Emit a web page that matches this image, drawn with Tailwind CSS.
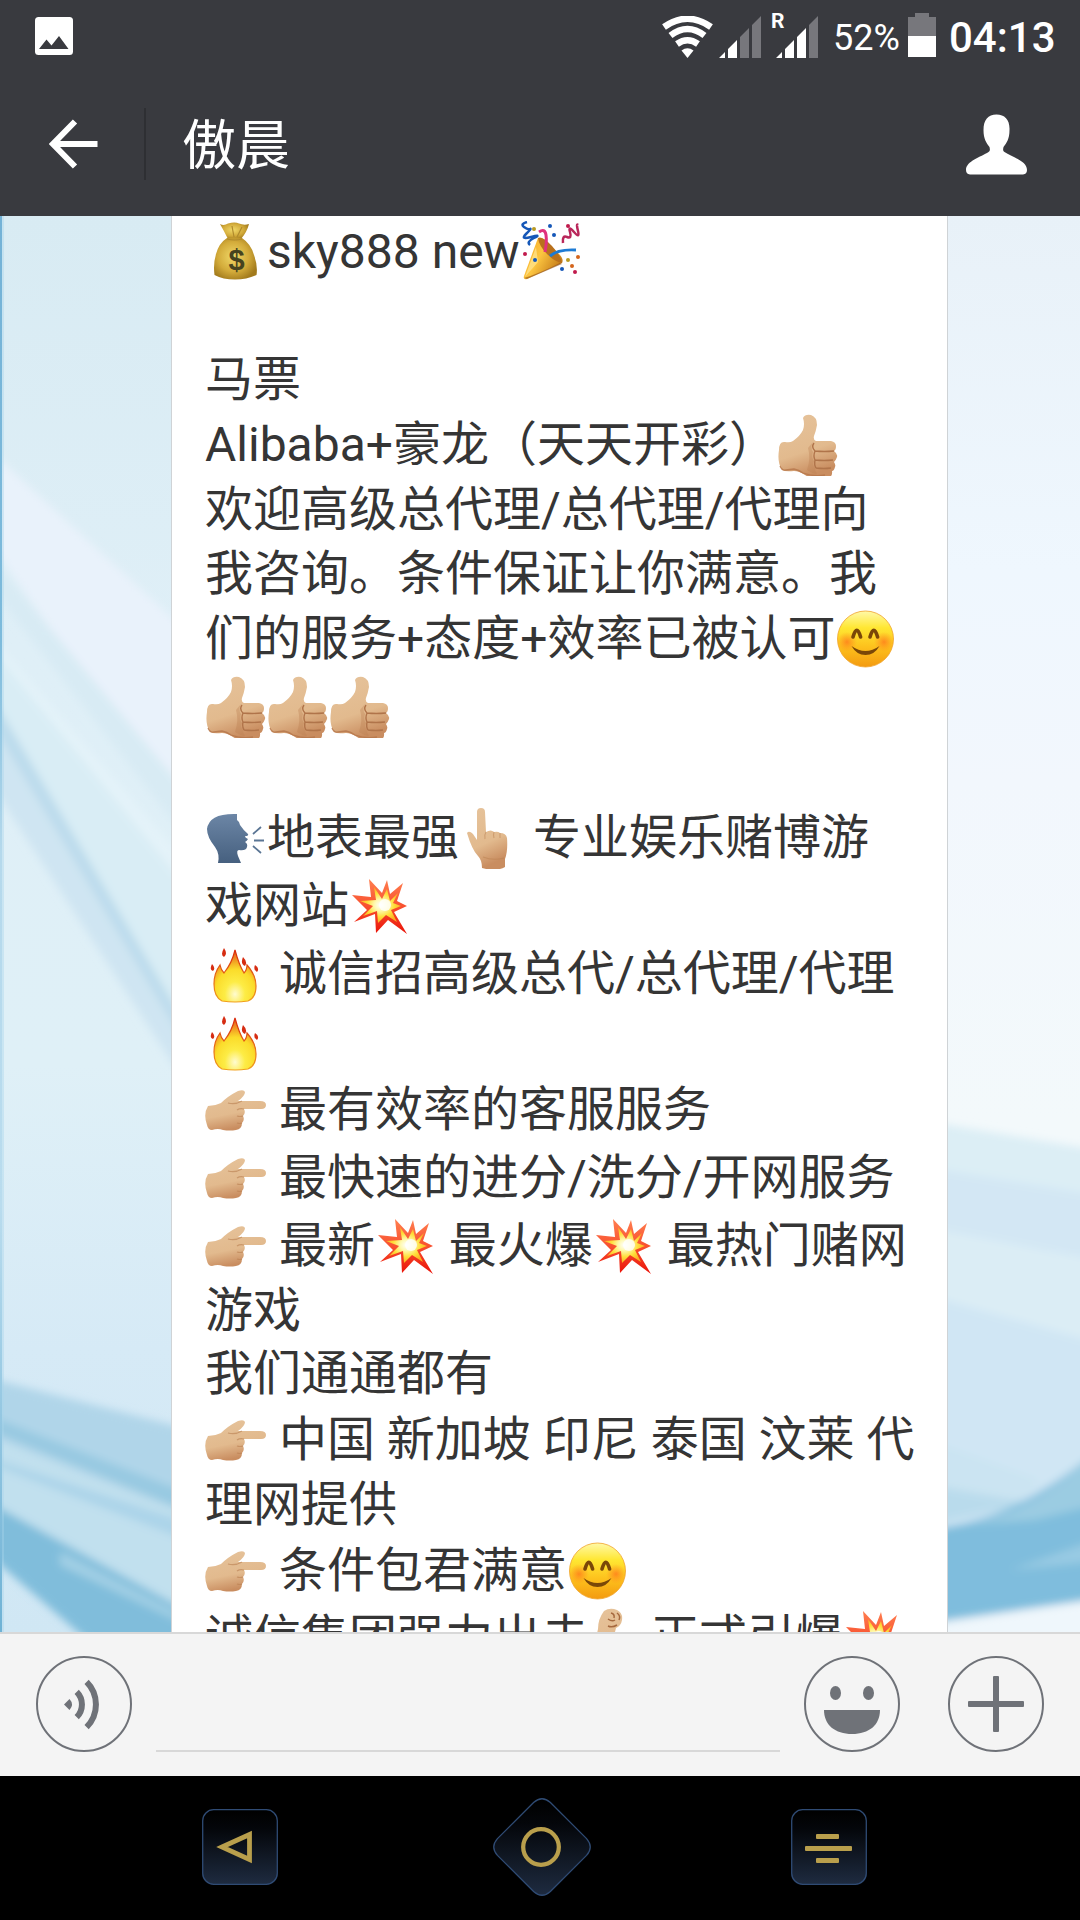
<!DOCTYPE html>
<html lang="zh-CN">
<head>
<meta charset="utf-8">
<title>傲晨</title>
<script src="https://cdn.jsdelivr.net/npm/@tailwindcss/browser@4"></script>
</head>
<body class="flex h-[1920px] w-[1080px] flex-col overflow-hidden bg-black font-['Roboto','Noto_Sans_CJK_SC',sans-serif]">

<!-- Emoji symbols -->
<svg class="absolute h-0 w-0">
  <defs>
    <linearGradient id="skin" x1="0" y1="0" x2="0.3" y2="1"><stop offset="0" stop-color="#e6c39b"/><stop offset=".65" stop-color="#e2ba8e"/><stop offset="1" stop-color="#c98d60"/></linearGradient>
    <radialGradient id="gold" cx=".45" cy=".45" r=".6"><stop offset="0" stop-color="#f0d868"/><stop offset=".6" stop-color="#d3ab3a"/><stop offset="1" stop-color="#a27a1c"/></radialGradient>
    <linearGradient id="face" x1="0" y1="0" x2="0" y2="1"><stop offset="0" stop-color="#fff9a8"/><stop offset=".3" stop-color="#ffe733"/><stop offset=".65" stop-color="#fdc01c"/><stop offset="1" stop-color="#f39a10"/></linearGradient>
    <radialGradient id="blush"><stop offset="0" stop-color="#ff7a1c" stop-opacity=".8"/><stop offset="1" stop-color="#ff8a1c" stop-opacity="0"/></radialGradient>
    <linearGradient id="red" x1="0" y1="0" x2="0" y2="1"><stop offset="0" stop-color="#ff7f50"/><stop offset=".5" stop-color="#f8502f"/><stop offset="1" stop-color="#ea1208"/></linearGradient>
    <radialGradient id="burst"><stop offset="0" stop-color="#ffffff"/><stop offset=".3" stop-color="#fff9b0"/><stop offset=".65" stop-color="#ffdf3c"/><stop offset="1" stop-color="#fbae20"/></radialGradient>
    <radialGradient id="flame" cx=".5" cy=".85" r=".8"><stop offset="0" stop-color="#fffbd0"/><stop offset=".3" stop-color="#fdec45"/><stop offset=".6" stop-color="#fbdc2a"/><stop offset="1" stop-color="#e8621c"/></radialGradient>
    <linearGradient id="flameEdge" x1="0" y1="0" x2="0" y2="1"><stop offset="0" stop-color="#d8280c"/><stop offset="1" stop-color="#f1a01c"/></linearGradient>
    <linearGradient id="head" x1="0" y1="0" x2="0" y2="1"><stop offset="0" stop-color="#6c86a6"/><stop offset="1" stop-color="#46607f"/></linearGradient>
    <linearGradient id="cone" x1="0" y1="0" x2="1" y2=".6"><stop offset="0" stop-color="#f7a51f"/><stop offset=".5" stop-color="#fcc540"/><stop offset="1" stop-color="#c47a18"/></linearGradient>

    <symbol id="money" viewBox="0 0 62 62">
      <path d="M15 3q4 2 8-.5 7-2 11 0 5 2 10 .5-2 8-8 15H23Q19 10 15 3z" fill="url(#gold)"/>
      <path d="M22 17h15q9 6 12 17 4 11 2.500 20Q42 58.500 30 58.500T9.500 54Q8 43 11 33 14 22 22 17z" fill="url(#gold)"/>
      <path d="M22 18q8 2 15 0M27 5l2 11M37 6l-5 10" stroke="#b08a2c" stroke-width="1.200" fill="none"/>
      <text x="31.500" y="49" text-anchor="middle" font-family="Liberation Sans" font-weight="700" font-size="29" fill="#46431f">$</text>
    </symbol>

    <symbol id="party" viewBox="0 0 62 62">
      <path d="M18 17 4 55q-1 4 3 3l35-16q2-4-3-9L26 20q-5-5-8-3z" fill="url(#cone)"/>
      <path d="M18 17q5-2 14 8t10 17q-7-1-15-9t-9-16z" fill="#b8701c"/>
      <path d="M16 26 5 56l13-15z" fill="#ffe28a" opacity=".8"/>
      <path d="M4 57q14-4 36-15l2 1L7 58z" fill="#8a4a12" opacity=".6"/>
      <path d="M19 11q6-4 7 3t-1 17" stroke="#e0317c" stroke-width="3" fill="none"/>
      <path d="M30 35q8-7 26-6" stroke="#1d7bd4" stroke-width="3" fill="none"/>
      <path d="M7 1q-7 2-3 5t6 2-4 5 5 3 3 1-4 7" stroke="#1557b8" stroke-width="2.500" fill="none"/>
      <path d="M43 22q-1-8 4-6t3-5 4 0 4-1 0-6" stroke="#b9265a" stroke-width="2.500" fill="none"/>
      <g fill="#1557b8"><circle cx="30" cy="5" r="2"/><circle cx="34" cy="14" r="2"/><circle cx="15" cy="39" r="2"/><circle cx="42" cy="48" r="2"/></g>
      <g fill="#c11a4c"><circle cx="48" cy="5" r="2"/><circle cx="5" cy="33" r="2"/><circle cx="55" cy="51" r="2"/></g>
      <g fill="#b99a22"><circle cx="14" cy="8" r="2"/><circle cx="48" cy="39" r="2"/></g>
      <g fill="#d4651c"><circle cx="58" cy="36" r="2"/><circle cx="52" cy="45" r="2"/></g>
    </symbol>

    <symbol id="thumb" viewBox="0 0 62 62">
      <path d="M26 4q2-4 8-3 6 2 6 10-1 6-3 11-1 4 2 5h15q5 1 5 5 0 4-2 5 4 3 3 6t-3 5q2 3 1 5-1 4-3 4 1 7-7 8-12 1-20-4-6-4-11-4Q8 58 5 56 0 48 2 36 2 27 8 28q5 1 8-1 7-5 10-11 2-6 0-12z" fill="url(#skin)"/>
      <path d="M36 28q-3 5 0 10-2 5 1 9-2 4 1 7 0 3 2 6-6-1-10-4 4-12 1-22z" fill="#b97f50" opacity=".35"/>
      <path d="M38 37q9 1 19 0M38 46q9 1 18 0M39 54q8 1 15 0M37 29q-3 4 1 8-2 5 0 9-1 5 1 8" stroke="#b0744a" stroke-width="1.400" fill="none"/>
      <path d="M3 52q2 5 6 4l8-1q5 1 9 4 11 4 22 2" stroke="#b5764a" stroke-width="1.300" fill="none" opacity=".8"/>
    </symbol>

    <symbol id="blushface" viewBox="0 0 62 62">
      <circle cx="30.500" cy="31" r="28" fill="url(#face)" stroke="#f0a22a" stroke-width=".8"/>
      <circle cx="12" cy="34" r="10" fill="url(#blush)"/><circle cx="49" cy="34" r="10" fill="url(#blush)"/>
      <path d="M18 29q3.800-13.500 7.600 0M35 29q3.800-13.500 7.600 0" stroke="#7a4708" stroke-width="3.600" fill="none" stroke-linecap="round"/>
      <path d="M16.500 38q14 10 28 0-5 9-14 9T16.500 38z" fill="#7a4708"/>
    </symbol>

    <symbol id="speak" viewBox="0 0 62 62">
      <path d="M32 7v6q3 2 3 5 4 6 8 9 1 2-3 2 0 2 3 3-1 2-3 3 3 2 2 5-1 4-8 3-3 0-1 6l3 7H13q2-9-3-16-8-10-8-18Q4 6 32 7z" fill="url(#head)"/>
      <path d="m48 27 8-7M49 33.500h10M48 39l8 7" stroke="#5a7594" stroke-width="1.800"/>
    </symbol>

    <symbol id="fingerup" viewBox="0 0 62 62">
      <path d="M18 5q0-4 4-4t4 4l1 20q5-3 8 0 4-1 6 1 6 0 7 5 1 13-2 21v8q-9 5-23 1 0-8-4-12-6-6-11-23 2-3 6 1l4 6z" fill="url(#skin)"/>
      <path d="M27 25q-2 3-1 7M35 25q-1 3 0 6M41 26v5M24 50q10 4 21 1" stroke="#b97f50" stroke-width="1.100" fill="none" opacity=".5"/>
    </symbol>

    <symbol id="boom" viewBox="0 0 62 62">
      <path d="M20 4 33 18 38 5l3 14L54 8l-6 18 10 5-13 6 13 22-19-14-12 13-1-19-21 8 13-12L3 20l19 2z" fill="url(#red)"/>
      <path d="m25 12 8 12 5-10 3 12 8-8-5 10 8 3-10 4 6 12-11-7-8 8-1-12-14 5 10-10-13-5 16-1z" fill="url(#burst)"/>
      <circle cx="36" cy="30" r="6" fill="#fff" opacity=".8"/>
    </symbol>

    <symbol id="fire" viewBox="0 0 62 62">
      <path d="M30 7q4 15 9 23 3-3 3-8 9 10 9 21 0 12-8 15-13 2-26 0-8-4-8-17 0-11 6-19 1 5 4 8 8-10 11-23z" fill="url(#flame)" stroke="url(#flameEdge)" stroke-width="1.200"/>
      <path d="M19 5q4 6 0 9-4-2 0-9zM38 14q5 5 2 9-5-2-2-9zM7 21q4 4 1 7-4-1-1-7zM50 22q5 3 2 7-4-2-2-7z" fill="#d62c12"/>
    </symbol>

    <symbol id="pointright" viewBox="0 0 62 62">
      <path d="M3 27q7 0 13-3Q23 17 33 12q6-2 7 1 0 4-7 9h22q6 0 6 4t-5 4H39q2 4-1 7 2 4-1 7 0 6-6 7-6 1-13 0-5-2-11 0-4 0-5-5-4-11 1-19z" fill="url(#skin)"/>
      <path d="M39 30q-4-1-7 1M38 37q-3 1-6 0M37 44q-2 1-5 0M23 24q7 2 14-2" stroke="#b97f50" stroke-width="1.200" fill="none" opacity=".6"/>
    </symbol>

    <symbol id="muscle" viewBox="0 0 62 62">
      <path d="M15 4q6-4 13-1 6 3 5 10-1 6-6 8l-4 16q8-7 19-2 13 6 15 24H8Q4 44 9 22 9 12 15 4z" fill="url(#skin)"/>
      <path d="M22 6q4 1 3 5m3-5q4 3 2 7m-11-1q4 3 7 1M19 19q4 2 9-1" stroke="#a5683e" stroke-width="1.500" fill="none"/>
    </symbol>
  </defs>
</svg>

<!-- Status bar and title bar -->
<header class="flex h-[216px] w-full shrink-0 flex-col bg-[#393a3f]">
  <div class="flex h-[72px] items-start pl-[35px] pr-[25px] text-white">
    <svg class="mt-[17px] h-[38px] w-[38px]" viewBox="0 0 38 38"><rect width="38" height="38" rx="3.500" fill="#fff"/><path d="M4 32 11.500 22.500 16.500 28.500 24 19 33.500 32z" fill="#393a3f"/></svg>
    <svg class="ml-auto mt-[16px] h-[42px] w-[51px]" viewBox="0 0 51 42" fill="none" stroke="#fff" stroke-width="6.500">
      <path d="M25.500 42 19.500 34.500q6-4.500 12 0z" fill="#fff" stroke="none"/>
      <path d="M15 28q10.500-7.500 21 0M8.500 19.500q17-13 34 0M2 11q23.500-16.500 47 0"/>
    </svg>
    <svg class="ml-[6px] mt-[16px] h-[42px] w-[42px]" viewBox="0 0 42 42"><path d="M0 42 6 36v6zM9 33l9-9v18H9z" fill="#fff"/><path d="m21 21 9-9v30h-9zM33 9l9-9v42h-9z" fill="#77777c"/></svg>
    <span class="ml-[10px] mt-[10px] w-[14px] text-[21px] leading-[22px] font-bold">R</span>
    <svg class="-ml-[9px] mt-[16px] h-[42px] w-[42px]" viewBox="0 0 42 42"><path d="M0 42 6 36v6zM9 33l9-9v18H9zM21 21l9-9v30h-9z" fill="#fff"/><path d="m33 9 9-9v42h-9z" fill="#77777c"/></svg>
    <span class="ml-[15px] mt-[17px] w-[67px] text-[36px] leading-[42px]">52%</span>
    <svg class="ml-[8px] mt-[13px] h-[44px] w-[28px]" viewBox="0 0 28 44"><path d="M7 0h14v4h7v19H0V4h7z" fill="#77777c"/><path d="M0 23h28v21H0z" fill="#fff"/></svg>
    <span class="ml-[13px] mt-[13px] w-[106px] text-[42px] leading-[50px] font-medium">04:13</span>
  </div>
  <div class="flex h-[144px] items-center pl-[49px] pr-[53px]">
    <svg class="h-[50px] w-[49px]" viewBox="0 0 49 50" fill="none" stroke="#fff" stroke-width="6"><path d="M26 2.500 4 25l22 22.500M4 25h44.500"/></svg>
    <div class="ml-[46px] h-[72px] w-[2px] bg-[#2e2f33]"></div>
    <h1 class="ml-[36px] mt-[5px] text-[54px] leading-[72px] font-normal text-white">傲晨</h1>
    <svg class="ml-auto h-[61px] w-[61px]" viewBox="0 0 61 61"><path d="M30.500.5C39 .5 44 6 43.500 16c0 9-3 13-6 17-.7 3-.5 4 1 5C46 43 61 47 61 56q0 4-4 4.500H4Q0 60 0 56c0-9 15-13 22.500-18 1.500-1 1.700-2 1-5-3-4-6-8-6-17C17.500 6 22 .5 30.500.5z" fill="#fff"/></svg>
  </div>
</header>

<!-- Conversation -->
<main class="relative h-[1416px] w-full shrink-0 overflow-hidden">
  <svg class="absolute inset-0 h-full w-full" viewBox="0 216 1080 1416" preserveAspectRatio="none">
    <defs>
      <filter id="soft"><feGaussianBlur stdDeviation="4.500"/></filter>
      <linearGradient id="bgL" x1="0" y1="0" x2="0" y2="1"><stop offset="0" stop-color="#d8ebf3"/><stop offset=".3" stop-color="#dfeff7"/><stop offset=".6" stop-color="#dff0f7"/><stop offset=".8" stop-color="#d6eaf6"/><stop offset="1" stop-color="#d0e7f4"/></linearGradient>
      <linearGradient id="bgR" x1="0" y1="0" x2="0" y2="1"><stop offset="0" stop-color="#e8f1f8"/><stop offset=".25" stop-color="#eff7fe"/><stop offset=".4" stop-color="#f2f7fd"/><stop offset=".64" stop-color="#f3f9fb"/></linearGradient>
      <linearGradient id="edge" x1="0" y1="0" x2="0" y2="1"><stop offset="0" stop-color="#74b2d6"/><stop offset=".3" stop-color="#7dbbdc"/><stop offset=".45" stop-color="#b5d9ec"/><stop offset=".7" stop-color="#b9dcee"/><stop offset="1" stop-color="#6fb2d5"/></linearGradient>
    </defs>
    <rect y="216" width="540" height="1416" fill="url(#bgL)"/>
    <rect x="540" y="216" width="540" height="1416" fill="url(#bgR)"/>
    <g filter="url(#soft)">
      <path d="M-15 446 180 625v190L-15 535z" fill="#e9f2fb"/>
      <path d="m-15 550 195 235v45L-15 580z" fill="#d8ebf4"/>
      <path d="m-15 630 195 225v30L-15 655z" fill="#e4f3f9"/>
      <path d="M-15 640 180 880v140L-15 690z" fill="#d9edf5"/>
      <path d="m-15 685 195 330v60L-15 775z" fill="#cfe5f2"/>
      <path d="m-15 685 195 330v20L-15 712z" fill="#bcdbec"/>
      <path d="m-15 1377 195 50v85L-15 1435z" fill="#b0d5e9"/>
      <path d="m-15 1414 195 76v18L-15 1428z" fill="#97c9e1"/>
      <path d="m-15 1436 195 76v95L-15 1504z" fill="#c1e0ee"/>
      <path d="m-15 1456 195 64v18L-15 1462z" fill="#acd4e9"/>
      <path d="m-15 1500 195 107v40H95L-15 1552z" fill="#80bddb"/>
      <path d="m60 1552 120 62v8L60 1565z" fill="#a3d0e5"/>
      <path d="m930 1122 165 28v110l-165-30z" fill="#d3e7f4"/>
      <path d="m930 1122 165 28v45l-165-27z" fill="#dceef5"/>
      <path d="m930 1228 165 32v87l-165-50z" fill="#dbedf5"/>
      <path d="m930 1296 165 46v150l-165 60z" fill="#d0e6f4"/>
      <path d="m930 1440 110 40-30 32-80-10z" fill="#cbe4f2"/>
      <path d="m930 1485 100 18-100 22z" fill="#b9dbec"/>
      <path d="M930 1529q80-6 165-76v146l-165 24z" fill="#7fbddd"/>
      <path d="M955 1526q70-5 140-73v52l-60 15z" fill="#9bcce2"/>
      <path d="m1010 1570 85-30v22z" fill="#98cae3"/>
      <path d="m930 1624 165-24v50H930z" fill="#eff7fc"/>
    </g>
    <path d="M0 216h2v1416H0z" fill="url(#edge)"/><path d="M2 216h2v1416H2z" fill="#a8d4ec" opacity=".4"/>
  </svg>

  <article class="relative ml-[171px] flex h-[1416px] w-[777px] flex-col border-x border-[#cfd3d6] bg-white pl-[33px] pt-[6px] text-[48px] leading-[60px] whitespace-pre text-[#353535]">
    <div class="flex h-[128px] shrink-0"><svg class="-mt-px size-[62px]"><use href="#money"/></svg>sky888 new<svg class="-mt-px size-[62px]"><use href="#party"/></svg></div>
    <div class="flex h-[65px] shrink-0">马票</div>
    <div class="flex h-[65px] shrink-0">Alibaba+豪龙（天天开彩）<svg class="-mt-px size-[62px]"><use href="#thumb"/></svg></div>
    <div class="flex h-[64px] shrink-0">欢迎高级总代理/总代理/代理向</div>
    <div class="flex h-[65px] shrink-0">我咨询。条件保证让你满意。我</div>
    <div class="flex h-[68px] shrink-0">们的服务+态度+效率已被认可<svg class="-mt-px size-[62px]"><use href="#blushface"/></svg></div>
    <div class="flex h-[131px] shrink-0"><svg class="-mt-px size-[62px]"><use href="#thumb"/></svg><svg class="-mt-px size-[62px]"><use href="#thumb"/></svg><svg class="-mt-px size-[62px]"><use href="#thumb"/></svg></div>
    <div class="flex h-[68px] shrink-0"><svg class="-mt-px size-[62px]"><use href="#speak"/></svg>地表最强<svg class="-mt-px size-[62px]"><use href="#fingerup"/></svg><span> 专业娱乐赌博游</span></div>
    <div class="flex h-[68px] shrink-0">戏网站<svg class="-mt-px size-[62px]"><use href="#boom"/></svg></div>
    <div class="flex h-[68px] shrink-0"><svg class="-mt-px size-[62px]"><use href="#fire"/></svg><span> 诚信招高级总代/总代理/代理</span></div>
    <div class="flex h-[68px] shrink-0"><svg class="-mt-px size-[62px]"><use href="#fire"/></svg></div>
    <div class="flex h-[68px] shrink-0"><svg class="-mt-px size-[62px]"><use href="#pointright"/></svg><span> 最有效率的客服服务</span></div>
    <div class="flex h-[68px] shrink-0"><svg class="-mt-px size-[62px]"><use href="#pointright"/></svg><span> 最快速的进分/洗分/开网服务</span></div>
    <div class="flex h-[65px] shrink-0"><svg class="-mt-px size-[62px]"><use href="#pointright"/></svg><span> 最新</span><svg class="-mt-px size-[62px]"><use href="#boom"/></svg><span> 最火爆</span><svg class="-mt-px size-[62px]"><use href="#boom"/></svg><span> 最热门赌网</span></div>
    <div class="flex h-[63px] shrink-0">游戏</div>
    <div class="flex h-[66px] shrink-0">我们通通都有</div>
    <div class="flex h-[65px] shrink-0"><svg class="-mt-px size-[62px]"><use href="#pointright"/></svg><span> 中国 新加坡 印尼 泰国 汶莱 代</span></div>
    <div class="flex h-[66px] shrink-0">理网提供</div>
    <div class="flex h-[67px] shrink-0"><svg class="-mt-px size-[62px]"><use href="#pointright"/></svg><span> 条件包君满意</span><svg class="-mt-px size-[62px]"><use href="#blushface"/></svg></div>
    <div class="flex h-[60px] shrink-0">诚信集团强力出击<svg class="-mt-px size-[62px]"><use href="#muscle"/></svg>正式引爆<svg class="-mt-px size-[62px]"><use href="#boom"/></svg></div>
  </article>
</main>

<!-- Message input -->
<section class="flex h-[144px] w-full shrink-0 items-start border-t-2 border-[#d8d8d8] bg-[#f4f4f4] px-[36px] pt-[22px]">
  <svg class="size-[96px]" viewBox="0 0 96 96" fill="none" stroke="#6f7278"><circle cx="48" cy="48" r="47" stroke-width="2"/><path d="m28 48.500 5.500-5.500q5 5.500 0 11z" fill="#6f7278" stroke="none"/><path d="M40.700 35.800a18 18 0 0 1 0 25.400M50.600 25.900a32 32 0 0 1 0 45.200" stroke-width="6"/></svg>
  <div class="ml-[24px] h-[96px] w-[624px] border-b-2 border-[#d8d8d8]"></div>
  <svg class="ml-[24px] size-[96px]" viewBox="0 0 96 96" fill="#6f7278"><circle cx="48" cy="48" r="47" stroke="#6f7278" stroke-width="2" fill="none"/><ellipse cx="31.500" cy="37" rx="5.500" ry="7"/><ellipse cx="64.500" cy="37" rx="5.500" ry="7"/><path d="M20 54h56c0 15-11 24-28 24S20 69 20 54z"/></svg>
  <svg class="ml-[48px] size-[96px]" viewBox="0 0 96 96" fill="#6f7278"><circle cx="48" cy="48" r="47" stroke="#6f7278" stroke-width="2" fill="none"/><rect x="20" y="45" width="56" height="6" rx="1"/><rect x="45" y="20" width="6" height="56" rx="1"/></svg>
</section>

<!-- System navigation -->
<nav class="flex h-[144px] w-full shrink-0 items-center bg-black pl-[202px]">
  <svg class="-mt-[2px] size-[76px]" viewBox="0 0 76 76"><defs><linearGradient id="nav" x1="0" y1="0" x2="0" y2="1"><stop offset="0" stop-color="#000"/><stop offset=".25" stop-color="#04060a"/><stop offset="1" stop-color="#1e2b40"/></linearGradient></defs><rect x=".7" y=".7" width="74.600" height="74.600" rx="11" fill="url(#nav)" stroke="#2f4b74" stroke-width="1.300"/><path d="M20 38 47.500 25.500v25z" fill="none" stroke="#b99f4c" stroke-width="4.800"/></svg>
  <svg class="-mt-[2px] ml-[215px] size-[98px]" viewBox="0 0 99 99"><path d="M41 4.500q8.500-7.500 17 0L94.500 41q7.500 8.500 0 17L58 94.500q-8.500 7.500-17 0L4.500 58q-7.500-8.500 0-17z" fill="url(#nav)" stroke="#2f4b74" stroke-width="1.300"/><circle cx="48.500" cy="49.500" r="18" fill="none" stroke="#b99f4c" stroke-width="4.300"/></svg>
  <svg class="-mt-[2px] ml-[200px] size-[76px]" viewBox="0 0 76 76"><rect x=".7" y=".7" width="74.600" height="74.600" rx="11" fill="url(#nav)" stroke="#2f4b74" stroke-width="1.300"/><g fill="#b99f4c"><rect x="25" y="25" width="23" height="5" rx="1"/><rect x="14" y="37" width="47" height="5" rx="1"/><rect x="25" y="49" width="23" height="5" rx="1"/></g></svg>
</nav>
</body>
</html>
